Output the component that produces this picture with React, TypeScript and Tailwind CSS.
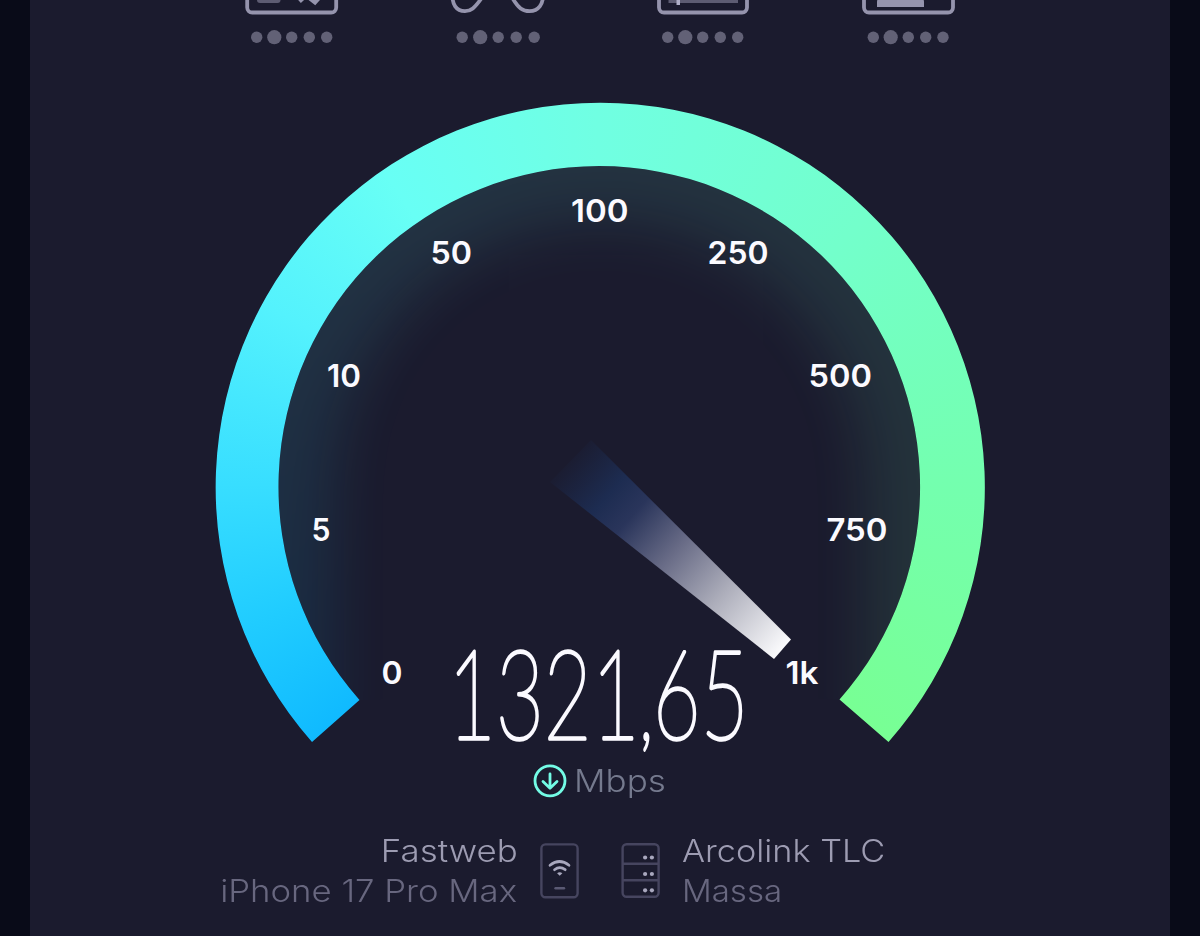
import React from 'react';

const labels = [
  { text: '0', x: 381.5, y: 683.5, width: 21 },
  { text: '5', x: 311.5, y: 540.6, width: 19 },
  { text: '10', x: 327, y: 387, width: 34 },
  { text: '50', x: 430.5, y: 263.6, width: 41.5 },
  { text: '100', x: 571, y: 221.5, width: 57.5 },
  { text: '250', x: 707.5, y: 263.6, width: 61 },
  { text: '500', x: 808.5, y: 387, width: 63.5 },
  { text: '750', x: 826.5, y: 540.6, width: 61 },
  { text: '1k', x: 785.5, y: 683.5, width: 33 },
];

const cards = [
  {
    id: 'video',
    dots: [256.7, 274.3, 291.7, 309.3, 326.7],
    art: (
      <>
        <path d="M247.200 -10V7.500a5 5 0 0 0 5 5h79a5 5 0 0 0 5-5v-18" fill="none" stroke="#9594ad" strokeWidth="3.8" />
        <path d="M257 -4h23.500v4q0 3-3 3h-17.500q-3 0-3-3z" fill="#5d5c72" />
        <path d="M299.500 1.500L306 -4.500L315 2.500L320 -3" fill="none" stroke="#9594ad" strokeWidth="4" />
      </>
    ),
    x: 189,
  },
  {
    id: 'gaming',
    dots: [461.7, 479.7, 497.7, 515.7, 533.7],
    art: (
      <path
        d="M452 -6C451.500 4 455.500 11.200 464.500 11.200C470.500 11.200 474 8 480.500 -1M512.500 -1C518 8 522 11.200 529 11.200C538 11.200 543 4 542.500 -6"
        fill="none"
        stroke="#9594ad"
        strokeWidth="3.8"
      />
    ),
    x: 394.5,
  },
  {
    id: 'streaming',
    dots: [667.7, 685.3, 702.7, 720.3, 737.7],
    art: (
      <>
        <path d="M659 -10V7.500a5 5 0 0 0 5 5h78a5 5 0 0 0 5-5v-18" fill="none" stroke="#9594ad" strokeWidth="3.8" />
        <path d="M668.500 -4H738V3H668.500z" fill="#5d5c72" />
        <path d="M676.500 -4H680V5H676.500z" fill="#b0afc8" />
      </>
    ),
    x: 600,
  },
  {
    id: 'calls',
    dots: [873.3, 890.7, 908.3, 925.7, 943],
    art: (
      <>
        <path d="M864 -10V7.500a5 5 0 0 0 5 5h79a5 5 0 0 0 5-5v-18" fill="none" stroke="#9594ad" strokeWidth="3.8" />
        <path d="M877 7V2q0-4 4-4h39q4 0 4 4v5z" fill="#9594ad" />
      </>
    ),
    x: 806,
  },
];

const arc = 'M312 742A384.600 384.600 0 1 1 888.500 742L839.500 699.500A320.800 320.800 0 1 0 359.500 700Z';

function Experience() {
  return (
    <div className="flex h-[46px] shrink-0">
      {cards.map((card) => (
        <svg key={card.id} className="h-[46px] w-[205.5px]" viewBox={`${card.x} 0 205.5 46`}>
          {card.art}
          {card.dots.map((cx, i) => (
            <circle key={cx} cx={cx} cy="37.2" r={i === 1 ? 7.1 : 5.7} fill="#626176" />
          ))}
        </svg>
      ))}
    </div>
  );
}

function Sweep() {
  return (
    <foreignObject x="200" y="46" width="800" height="704">
      <div className="h-[704px] w-[800px] bg-[conic-gradient(from_228.5deg_at_400.5px_441px,#10baff_0deg,#20ccff_20deg,#38deff_42deg,#54f2fd_70deg,#68fff5_97deg,#70ffe2_131deg,#73ffcb_176deg,#74ffae_222deg,#78ff94_263deg,#78ff94_311deg,#10baff_312deg)]" />
    </foreignObject>
  );
}

function Gauge() {
  return (
    <svg className="h-[704px] w-[800px] shrink-0 overflow-visible" viewBox="200 46 800 704">
      <defs>
        <clipPath id="arc">
          <path d={arc} />
        </clipPath>
        <clipPath id="dial">
          <path d="M359.500 700A320.800 320.800 0 1 1 839.500 699.500Z" />
        </clipPath>
        <clipPath id="rim">
          <path clipRule="evenodd" d="M200 46H1000V750H200ZM334 750V487.500A266.500 266.500 0 0 1 867 487.500V750Z" />
        </clipPath>
        <filter id="soft" x="-20%" y="-20%" width="140%" height="140%">
          <feGaussianBlur stdDeviation="29" />
        </filter>
        <linearGradient id="needle" gradientUnits="userSpaceOnUse" x1="565" y1="456" x2="782" y2="649">
          <stop offset="0" stopColor="#1b2a4e" stopOpacity="0" />
          <stop offset="0.2" stopColor="#1d2c51" />
          <stop offset="0.31" stopColor="#2a355b" />
          <stop offset="0.5" stopColor="#686b86" />
          <stop offset="0.72" stopColor="#acadba" />
          <stop offset="1" stopColor="#fafafc" />
        </linearGradient>
      </defs>

      <g clipPath="url(#dial)">
        <g filter="url(#soft)" opacity="0.1">
          <g clipPath="url(#rim)">
            <Sweep />
          </g>
        </g>
      </g>
      <g clipPath="url(#arc)">
        <Sweep />
      </g>

      <path d="M591 440L791 639.500L774 659L550 482Z" fill="url(#needle)" />

      <g fill="#fbfaff" className="font-['Inter',sans-serif] text-[31.5px] font-semibold">
        {labels.map((label) => (
          <text key={label.text} x={label.x} y={label.y} textLength={label.width} lengthAdjust="spacingAndGlyphs">
            {label.text}
          </text>
        ))}
      </g>

      <text
        transform="translate(448 738.500) scale(0.665 1)"
        textLength="452"
        fill="#fbfaff"
        stroke="#fbfaff"
        strokeWidth="3.5"
        strokeLinejoin="round"
        className="font-['Lato',sans-serif] text-[124px] font-thin"
      >
        1321<tspan className="text-[92px]">,</tspan>65
      </text>
    </svg>
  );
}

function PhoneIcon() {
  return (
    <svg className="h-[56px] w-[39px]" viewBox="539.5 843 39 56" fill="none" strokeLinecap="round">
      <rect x="540.9" y="844.4" width="36.200" height="52.800" rx="4" stroke="#46455f" strokeWidth="2.4" />
      <path d="M549.500 865.300Q559 857.700 568.500 865.300M554 869.700Q559.200 865.700 564.700 869.700" stroke="#a9a8be" strokeWidth="2.7" />
      <path d="M556.600 873.300Q559.200 871 561.900 873.300L559.200 875.800Z" fill="#a9a8be" />
      <path d="M555 888.200H563.500" stroke="#5a5973" strokeWidth="2.4" />
    </svg>
  );
}

function ServerIcon() {
  return (
    <svg className="h-[56px] w-[39px]" viewBox="621.500 843 39 56" fill="none">
      <rect x="623.1" y="844.3" width="36" height="52.500" rx="4" stroke="#46455f" strokeWidth="2.4" />
      <path d="M623 863.700H659M623 880.200H659" stroke="#46455f" strokeWidth="2.4" />
      {[857.5, 874, 890.3].map((cy) => (
        <g key={cy} fill="#a9a8be">
          <circle cx="645.6" cy={cy} r="2.1" />
          <circle cx="652.4" cy={cy} r="2.1" />
        </g>
      ))}
    </svg>
  );
}

export default function App() {
  return (
    <main className="h-[936px] w-[1200px] overflow-hidden bg-[#090b18] px-[30px] font-['Inter',sans-serif]">
      <section className="flex h-full flex-col items-center bg-[#1b1b2e]">
        <Experience />
        <Gauge />

        <div className="mt-[11px] flex h-10 w-full shrink-0 items-center pl-[503px]">
          <svg className="h-[34px] w-[34px]" viewBox="0 0 34 34" fill="none" stroke="#73fbe5" strokeWidth="2.8" strokeLinecap="round" strokeLinejoin="round">
            <circle cx="17" cy="16.800" r="15" />
            <path d="M17 10V24M10 17.500L17 24.300L24 17.500" />
          </svg>
          <span className="ml-[7px] origin-left scale-x-[1.13] text-[31px] font-light leading-8 text-[#757a8e]">Mbps</span>
        </div>

        <div className="mt-[30px] flex w-full shrink-0 text-[31px] font-light leading-10">
          <div className="flex w-[487.5px] flex-col items-end whitespace-nowrap">
            <span className="origin-right scale-x-[1.125] text-[#9d9cb2]">Fastweb</span>
            <span className="origin-right scale-x-[1.12] text-[#68677f]">iPhone 17 Pro Max</span>
          </div>
          <div className="ml-[22px] mt-[12px] flex gap-[42.5px]">
            <PhoneIcon />
            <ServerIcon />
          </div>
          <div className="ml-[21.5px] flex flex-col items-start whitespace-nowrap">
            <span className="origin-left scale-x-[1.105] text-[#9d9cb2]">Arcolink TLC</span>
            <span className="origin-left scale-x-[1.065] text-[#68677f]">Massa</span>
          </div>
        </div>
      </section>
    </main>
  );
}
